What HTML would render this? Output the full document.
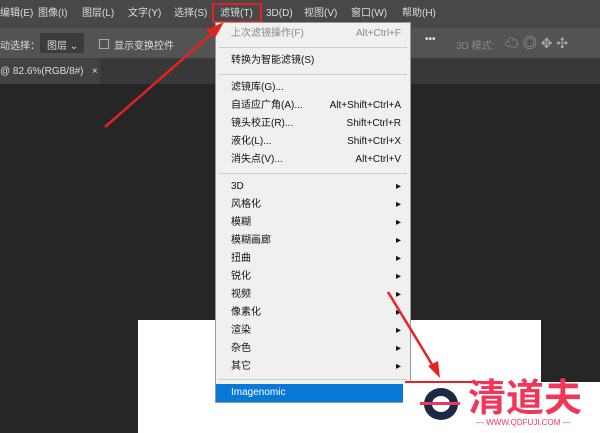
<!DOCTYPE html><html><head><meta charset="utf-8"><style>
body{margin:0;width:600px;height:433px;overflow:hidden;background:#262626;font-family:"Liberation Sans","Noto Sans CJK SC",sans-serif;position:relative}
.a{position:absolute}
.mb{top:0;left:0;width:600px;height:28px;background:#484848;color:#ddd;font-size:10px}
.mb span{position:absolute;top:7px;line-height:14px}
.tb{top:28px;left:0;width:600px;height:30px;background:#535353;color:#ddd;font-size:10px}
.tab{top:58px;left:0;width:600px;height:26px;background:#383838}
.menu{left:215px;top:22px;width:196px;height:381px;background:#f0f0f0;border:1px solid #999;box-sizing:border-box;font-size:10px;color:#111}
.it{position:absolute;left:15px;width:170px;height:18px;line-height:18px}
.it b{position:absolute;right:0;font-weight:normal}
.sep{position:absolute;left:3px;right:3px;height:1px;background:#ccc}
</style></head><body>
<div class="a mb">
<span style="left:0">编辑(E)</span><span style="left:38px">图像(I)</span><span style="left:82px">图层(L)</span><span style="left:128px">文字(Y)</span><span style="left:174px">选择(S)</span><span style="left:220px">滤镜(T)</span><span style="left:266px">3D(D)</span><span style="left:304px">视图(V)</span><span style="left:351px">窗口(W)</span><span style="left:402px">帮助(H)</span>
</div>
<div class="a" style="left:212px;top:3px;width:50px;height:20px;border:2px solid #e52222;box-sizing:border-box"></div>
<div class="a tb"><span class="a" style="left:0;top:9px">动选择：</span>
<div class="a" style="left:40px;top:5px;width:44px;height:20px;background:#3c3c3c"></div><span class="a" style="left:47px;top:9px">图层 ⌄</span>
<div class="a" style="left:99px;top:11px;width:8px;height:8px;border:1px solid #aaa"></div><span class="a" style="left:114px;top:9px">显示变换控件</span>
<span class="a" style="left:425px;top:6px;font-weight:bold">•••</span><span class="a" style="left:456px;top:9px;color:#888">3D 模式:</span>
<span class="a" style="left:505px;top:5px;color:#aaa;font-size:14px">☁ ◎ ✥ ✣</span></div>
<div class="a tab"><div class="a" style="left:0;top:0;width:100px;height:26px;background:#424242"></div><span class="a" style="left:0;top:8px;color:#ddd;font-size:10px">@ 82.6%(RGB/8#)&nbsp;&nbsp; ×</span></div>
<div class="a" style="left:138px;top:320px;width:403px;height:113px;background:#fff"></div>
<div class="a menu">
<div class="it" style="top:2px;color:#888">上次滤镜操作(F)<b>Alt+Ctrl+F</b></div>
<div class="sep" style="top:24px"></div>
<div class="it" style="top:29px">转换为智能滤镜(S)</div>
<div class="sep" style="top:51px"></div>
<div class="it" style="top:56px">滤镜库(G)...</div>
<div class="it" style="top:74px">自适应广角(A)...<b>Alt+Shift+Ctrl+A</b></div>
<div class="it" style="top:92px">镜头校正(R)...<b>Shift+Ctrl+R</b></div>
<div class="it" style="top:110px">液化(L)...<b>Shift+Ctrl+X</b></div>
<div class="it" style="top:128px">消失点(V)...<b>Alt+Ctrl+V</b></div>
<div class="sep" style="top:150px"></div>
<div class="it" style="top:155px">3D<b>▸</b></div>
<div class="it" style="top:173px">风格化<b>▸</b></div>
<div class="it" style="top:191px">模糊<b>▸</b></div>
<div class="it" style="top:209px">模糊画廊<b>▸</b></div>
<div class="it" style="top:227px">扭曲<b>▸</b></div>
<div class="it" style="top:245px">锐化<b>▸</b></div>
<div class="it" style="top:263px">视频<b>▸</b></div>
<div class="it" style="top:281px">像素化<b>▸</b></div>
<div class="it" style="top:299px">渲染<b>▸</b></div>
<div class="it" style="top:317px">杂色<b>▸</b></div>
<div class="it" style="top:335px">其它<b>▸</b></div>
<div class="sep" style="top:356px"></div>
<div class="a" style="left:0;top:361px;width:194px;height:18px;background:#0a78d7"></div>
<div class="it" style="top:361px;color:#fff">Imagenomic</div>
</div>
<div class="a" style="left:403px;top:382px;width:197px;height:51px;background:#fff"></div>
<div class="a" style="left:405px;top:381px;width:95px;height:2px;background:#e52222"></div>
<div class="a" style="left:424px;top:388px;width:34px;height:32px;border-radius:50%;border:8px solid #1b2a44;box-sizing:border-box"></div>
<div class="a" style="left:420px;top:402px;width:40px;height:3px;background:#f0375a"></div>
<div class="a" style="left:468px;top:378px;font-size:38px;font-weight:bold;color:#f0375a;line-height:42px">清道夫</div>
<div class="a" style="left:476px;top:418px;font-size:8px;color:#f0375a;white-space:nowrap">— WWW.QDFUJI.COM —</div>
<svg class="a" style="left:0;top:0" width="600" height="433">
<line x1="105" y1="127" x2="216" y2="30" stroke="#e52222" stroke-width="2.5"/>
<polygon points="224,22 206,30 215,38" fill="#e52222"/>
<line x1="388" y1="292" x2="433" y2="366" stroke="#e52222" stroke-width="2.5"/>
<polygon points="440,378 428,366 438,361" fill="#e52222"/>
</svg>
</body></html>
